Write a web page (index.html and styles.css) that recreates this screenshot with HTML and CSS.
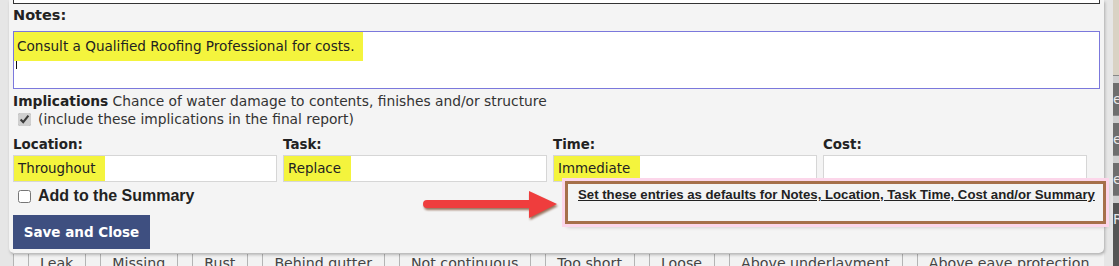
FILE: index.html
```html
<!DOCTYPE html>
<html lang="en">
<head>
  <meta charset="UTF-8">
  <title>Edit Comment</title>
  <link rel="stylesheet" href="styles.css">
</head>
<body>
  <div class="screen">
    <div class="dialog">
      <div class="prev-field"></div>

      <div class="notes-label">Notes:</div>
      <div class="notes-box">
        <span class="hl hl-notes">Consult a Qualified Roofing Professional for costs.</span>
        <span class="caret"></span>
      </div>

      <div class="implications"><b>Implications</b> Chance of water damage to contents, finishes and/or structure</div>
      <label class="check-line">
        <input type="checkbox" checked>
        <span>(include these implications in the final report)</span>
      </label>

      <div class="fields">
        <div class="field">
          <div class="field-label">Location:</div>
          <div class="field-input"><span class="hl">Throughout</span></div>
        </div>
        <div class="field">
          <div class="field-label">Task:</div>
          <div class="field-input"><span class="hl">Replace</span></div>
        </div>
        <div class="field">
          <div class="field-label">Time:</div>
          <div class="field-input"><span class="hl">Immediate</span></div>
        </div>
        <div class="field">
          <div class="field-label">Cost:</div>
          <div class="field-input"></div>
        </div>
      </div>

      <label class="summary-line">
        <input type="checkbox">
        <span>Add to the Summary</span>
      </label>

      <button class="save-btn">Save and Close</button>

      <!-- screenshot annotation: arrow + highlight box -->
      <svg class="arrow" width="140" height="40" viewBox="0 0 140 40">
        <path d="M4 12 L106 12 L106 3 L134 16 L106 30 L106 20 L4 20 A4 4 0 0 1 4 12 Z" fill="#ef3d3d"/>
      </svg>
      <div class="defaults-box">
        <a href="#" class="defaults-link">Set these entries as defaults for Notes, Location, Task Time, Cost and/or Summary</a>
      </div>
    </div>

    <div class="sidebar">
      <div class="sb-top"></div>
      <div class="sb-sep"></div>
      <div class="sb-block">e</div>
      <div class="sb-sep"></div>
      <div class="sb-block">e</div>
      <div class="sb-sep"></div>
      <div class="sb-block">e</div>
      <div class="sb-sep"></div>
      <div class="sb-block dark">R</div>
    </div>

    <div class="options-row">
      <div class="opt-box"></div><div class="opt">Leak</div>
      <div class="opt-box"></div><div class="opt">Missing</div>
      <div class="opt-box"></div><div class="opt">Rust</div>
      <div class="opt-box"></div><div class="opt">Behind gutter</div>
      <div class="opt-box"></div><div class="opt">Not continuous</div>
      <div class="opt-box"></div><div class="opt">Too short</div>
      <div class="opt-box"></div><div class="opt">Loose</div>
      <div class="opt-box"></div><div class="opt">Above underlayment</div>
      <div class="opt-box"></div><div class="opt">Above eave protection</div>
    </div>
  </div>
</body>
</html>
```

FILE: styles.css
```css
body {
  margin: 0;
  background-color: #e6e6e6;
  font-family: 'DejaVu Sans', Verdana, sans-serif;
  color: #222;
  overflow: hidden;
}

.screen {
  display: grid;
  grid-template-columns: 1104px 1fr;
  grid-template-rows: 253px 13px;
  height: 266px;
}

.dialog {
  position: relative;
  grid-column: 1;
  grid-row: 1;
  z-index: 1;
  height: 253px;
  margin-left: 9px;
  padding-left: 4px;
  background: #f4f4f4;
  border-radius: 0 0 5px 5px;
  box-shadow: 1px 2px 3px rgba(0, 0, 0, 0.25);
}

.prev-field {
  width: 1085px;
  height: 3px;
  border: 1px solid #333;
  border-top: none;
  background: #fff;
}

.notes-label {
  margin-top: 2px;
  font-size: 14.5px;
  font-weight: bold;
  line-height: 18px;
}

.notes-box {
  width: 1085px;
  height: 56px;
  margin-top: 7px;
  border: 1px solid #7b78dc;
  background: #fff;
  font-size: 13.6px;
}

.hl {
  background: #f4f43d;
}

.hl-notes {
  display: inline-block;
  height: 29px;
  line-height: 29px;
  padding: 0 8px 0 3px;
}

.caret {
  display: block;
  width: 1px;
  height: 14px;
  margin: -6px 0 0 2px;
  background: #111;
}

.implications {
  margin-top: 3px;
  font-size: 13.8px;
  line-height: 18px;
  color: #333;
}

.implications b {
  color: #222;
}

.check-line {
  display: flex;
  align-items: center;
  gap: 7px;
  margin-left: 5px;
  font-size: 13.8px;
  line-height: 18px;
  color: #333;
}

.check-line input,
.summary-line input {
  width: 13px;
  height: 13px;
  margin: 0;
  accent-color: #cfcfcf;
}

.fields {
  display: grid;
  grid-template-columns: repeat(4, 264px);
  gap: 6px;
  margin-top: 9px;
}

.field-label {
  font-size: 13.4px;
  font-weight: bold;
  line-height: 16px;
}

.field-input {
  height: 25px;
  margin-top: 2px;
  border: 1px solid #d6d6d6;
  background: #fff;
  font-size: 13.4px;
  line-height: 25px;
}

.field-input .hl {
  display: inline-block;
  padding: 0 10px 0 4px;
}

.summary-line {
  display: flex;
  align-items: center;
  gap: 7px;
  margin: 5px 0 0 5px;
  font-family: 'Liberation Sans', Arial, sans-serif;
  font-size: 16px;
  font-weight: bold;
  line-height: 18px;
}

.save-btn {
  display: block;
  width: 137px;
  height: 34px;
  margin-top: 10px;
  padding: 0;
  border: none;
  background: #3e4f80;
  color: #fff;
  font-family: 'DejaVu Sans', Verdana, sans-serif;
  font-size: 13.5px;
  font-weight: bold;
  cursor: pointer;
}

.arrow {
  position: absolute;
  left: 414px;
  top: 188px;
  filter: drop-shadow(1px 2px 1px rgba(120, 70, 40, 0.75));
}

.defaults-box {
  position: absolute;
  left: 556px;
  top: 181px;
  width: 525px;
  height: 37px;
  padding-left: 10px;
  border: 3px solid #a6704a;
  box-shadow: 0 0 0 3px #fcd6ea, 2px 3px 4px rgba(0, 0, 0, 0.2);
}

.defaults-link {
  display: block;
  margin-top: 3px;
  font-family: 'Liberation Sans', Arial, sans-serif;
  font-size: 13.2px;
  font-weight: bold;
  line-height: 16px;
  color: #222;
  white-space: nowrap;
}

.sidebar {
  grid-column: 2;
  grid-row: 1 / span 2;
  display: flex;
  flex-direction: column;
  margin-left: 9px;
}

.sb-top {
  height: 75px;
  background: #d9d2c4;
}

.sb-sep {
  height: 7px;
  background: #cfcfcf;
  border-top: 1px solid #888;
}

.sb-block {
  height: 32px;
  background: #6e6e6e;
  color: #e8e8e8;
  font-size: 14px;
  line-height: 32px;
  overflow: hidden;
}

.sb-block.dark {
  flex: 1;
  background: #555;
}

.options-row {
  grid-column: 1;
  grid-row: 2;
  display: flex;
  margin-left: 13px;
  padding-top: 1px;
  font-size: 14.2px;
  line-height: 18px;
  color: #444;
  background: #f2f2f2;
  white-space: nowrap;
  overflow: hidden;
}

.opt-box {
  flex: none;
  width: 14px;
  border-left: 1px solid #b4b4b4;
}

.opt {
  flex: none;
  padding: 0 12px 0 11px;
  border-left: 1px solid #b4b4b4;
}
```
